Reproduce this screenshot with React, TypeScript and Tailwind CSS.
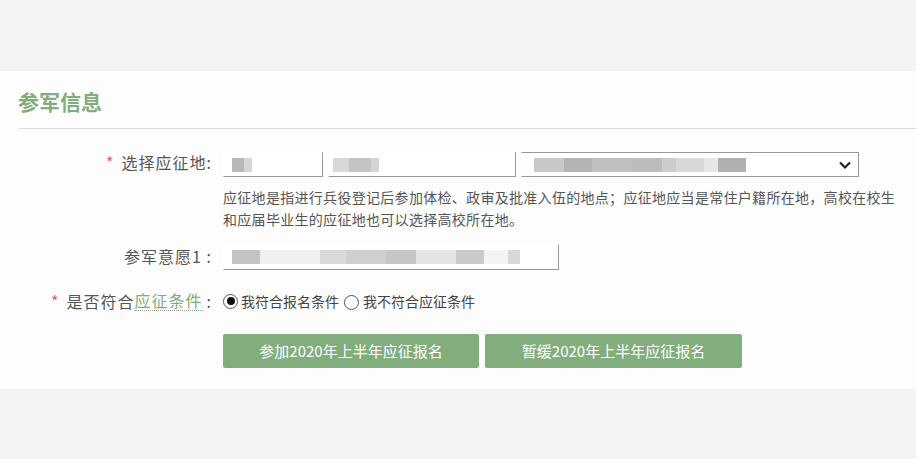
import React from "react";

const font = { fontFamily: '"Microsoft YaHei", "Noto Sans CJK SC", "Noto Sans", sans-serif' };

function Blocks({ items }: { items: { w: number; c: string }[] }) {
  return (
    <div className="flex h-[14px] items-center blur-[0.6px]">
      {items.map((b, i) => (
        <div key={i} className="h-[14px]" style={{ width: b.w, background: b.c }} />
      ))}
    </div>
  );
}

export default function App() {
  return (
    <div className="min-h-[459px] w-[916px] bg-[#f4f4f4] pt-[71px]" style={font}>
      <div className="bg-[#fdfdfd] pb-[21px]">
        <div className="pl-[18px] pt-[18px]">
          <div className="text-[21px] font-bold leading-[24px] text-[#82ad7d]">参军信息</div>
          <div className="ml-px mt-[15px] h-px bg-[#dcdcdc]" />
        </div>

        <div className="mt-[23px] flex flex-col text-[16px] tracking-[1px] text-[#555]">
          {/* row 1 */}
          <div className="flex items-start">
            <div className="flex h-[20px] w-[212px] shrink-0 items-center justify-end">
              <span className="mr-[7px] text-[#e06050]">*</span>
              <span>选择应征地:</span>
            </div>
            <div className="ml-[11px] flex flex-col tracking-normal">
              <div className="relative flex items-center gap-[5px]">
                <div className="flex h-[25px] w-[100px] items-center border border-[#999] border-t-transparent border-l-transparent bg-white pl-[8px]">
                  <Blocks items={[{ w: 12, c: "#b8b8b8" }, { w: 8, c: "#d6d6d6" }]} />
                </div>
                <div className="flex h-[25px] w-[188px] items-center border border-[#999] border-t-transparent border-l-transparent bg-white pl-[4px]">
                  <Blocks items={[{ w: 16, c: "#d8d8d8" }, { w: 22, c: "#c4c4c4" }, { w: 8, c: "#d4d4d4" }]} />
                </div>
                <div className="flex h-[25px] w-[338px] items-center justify-between border border-[#999] border-l-transparent bg-white pl-[12px] pr-[6px]">
                  <Blocks
                    items={[
                      { w: 30, c: "#c8c8c8" },
                      { w: 28, c: "#b4b4b4" },
                      { w: 40, c: "#c0c0c0" },
                      { w: 30, c: "#bcbcbc" },
                      { w: 14, c: "#cccccc" },
                      { w: 28, c: "#d8d8d8" },
                      { w: 14, c: "#e6e6e6" },
                      { w: 28, c: "#b0b0b0" },
                    ]}
                  />
                  <svg width="14" height="10" viewBox="0 0 14 10">
                    <path d="M2 2.5 L7 7.5 L12 2.5" fill="none" stroke="#222" strokeWidth="2.2" />
                  </svg>
                </div>
              </div>
              <div className="mt-[9px] whitespace-nowrap text-[14px] leading-[22px] tracking-[0.3px] text-[#555]">
                应征地是指进行兵役登记后参加体检、政审及批准入伍的地点；应征地应当是常住户籍所在地，高校在校生
                <br />
                和应届毕业生的应征地也可以选择高校所在地。
              </div>
            </div>
          </div>

          {/* row 2 */}
          <div className="mt-[14px] flex items-center">
            <div className="flex h-[26px] w-[212px] shrink-0 items-center justify-end pb-[2px]">参军意愿1 :</div>
            <div className="ml-[11px] flex h-[26px] w-[336px] items-center border border-[#999] border-t-transparent border-l-transparent bg-white pl-[8px]">
              <Blocks
                items={[
                  { w: 28, c: "#c4c4c4" },
                  { w: 60, c: "#f0f0f0" },
                  { w: 26, c: "#dadada" },
                  { w: 40, c: "#cfcfcf" },
                  { w: 30, c: "#c6c6c6" },
                  { w: 40, c: "#e4e4e4" },
                  { w: 28, c: "#c9c9c9" },
                  { w: 24, c: "#f4f4f4" },
                  { w: 12, c: "#d8d8d8" },
                ]}
              />
            </div>
          </div>

          {/* row 3 */}
          <div className="mt-[20px] flex items-center">
            <div className="flex h-[22px] w-[212px] shrink-0 items-center justify-end">
              <span className="mr-[7px] text-[#e06050]">*</span>
              <span>是否符合</span>
              <span className="border-b border-dotted border-[#999] leading-[19px] text-[#7fae7a]">应征条件</span>
              <span className="ml-[4px]">:</span>
            </div>
            <div className="ml-[11px] flex items-center text-[14px] tracking-normal text-[#444]">
              <span className="mr-[3px] flex h-[15px] w-[15px] items-center justify-center rounded-full border border-[#555] bg-white">
                <span className="h-[8px] w-[8px] rounded-full bg-[#111]" />
              </span>
              <span>我符合报名条件</span>
              <span className="ml-[5px] mr-[4px] mt-[2px] h-[15px] w-[15px] rounded-full border border-[#555] bg-white" />
              <span>我不符合应征条件</span>
            </div>
          </div>

          {/* buttons */}
          <div className="ml-[223px] mt-[22px] flex gap-[6px] tracking-normal">
            <button className="h-[34px] w-[256px] rounded-[2px] bg-[#82ad7d] text-[15px] text-white">
              参加2020年上半年应征报名
            </button>
            <button className="h-[34px] w-[257px] rounded-[2px] bg-[#82ad7d] text-[15px] text-white">
              暂缓2020年上半年应征报名
            </button>
          </div>
        </div>
      </div>
    </div>
  );
}
